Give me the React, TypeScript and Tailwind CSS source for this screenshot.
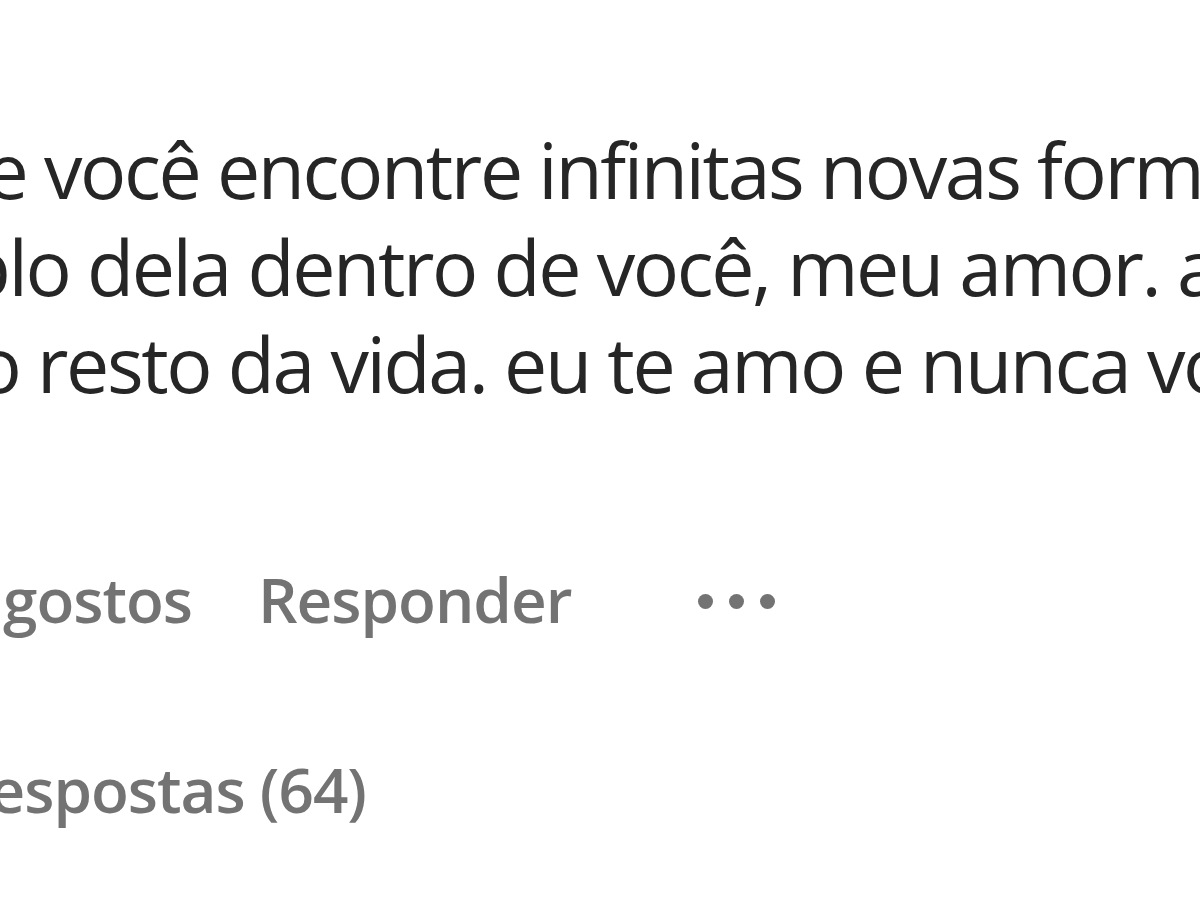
export default function App() {
  return (
    <div className="w-[1200px] h-[900px] overflow-hidden bg-white font-['Open_Sans','Noto_Sans',sans-serif]">
      {/* comment body, cut at both edges */}
      <div className="pt-[121px] text-[#262626] text-[77px] leading-[97px] tracking-[-2.4px]">
        <div className="flex whitespace-nowrap">
          <span className="w-[44px] shrink-0 flex justify-end">que&nbsp;</span>
          <span>você encontre infinitas novas formas</span>
        </div>
        <div className="flex whitespace-nowrap">
          <span className="w-[87px] shrink-0 flex justify-end">exemplo&nbsp;</span>
          <span>dela dentro de você, meu amor. a</span>
        </div>
        <div className="flex whitespace-nowrap">
          <span className="w-[37px] shrink-0 flex justify-end">no&nbsp;</span>
          <span>resto da vida. eu te amo e nunca vou</span>
        </div>
      </div>

      {/* actions */}
      <div className="mt-[147px] flex items-center text-[#737373] text-[62px] leading-[80px] font-semibold tracking-[-1px] whitespace-nowrap">
        <span className="w-[192px] shrink-0 flex justify-end">2 gostos</span>
        <span className="ml-[66px]">Responder</span>
        <span className="ml-[127px] mt-[4px] flex gap-[16px]">
          <span className="w-[15px] h-[15px] rounded-full bg-[#737373]" />
          <span className="w-[15px] h-[15px] rounded-full bg-[#737373]" />
          <span className="w-[15px] h-[15px] rounded-full bg-[#737373]" />
        </span>
      </div>

      <div className="mt-[110px] flex text-[#737373] text-[62px] leading-[80px] font-semibold tracking-[-1px] whitespace-nowrap">
        <span className="w-[366px] shrink-0 flex justify-end">Ver respostas (64)</span>
      </div>
    </div>
  );
}
